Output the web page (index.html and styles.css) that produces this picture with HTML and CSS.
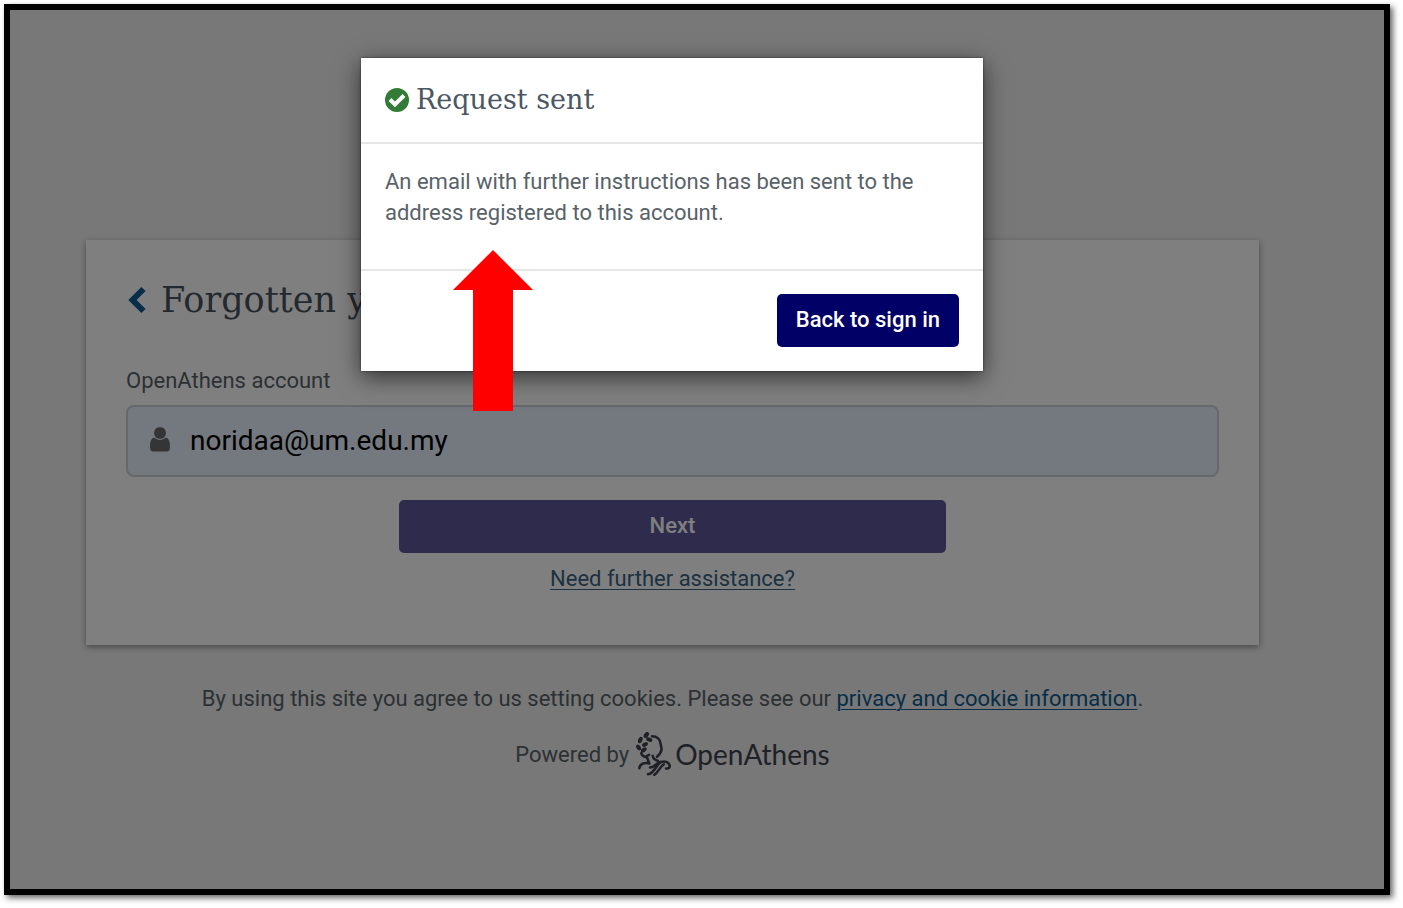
FILE: index.html
```html
<!DOCTYPE html>
<html lang="en">
<head>
<meta charset="utf-8">
<title>OpenAthens - Request sent</title>
<link rel="stylesheet" href="styles.css">
</head>
<body>
<div class="frame">
  <main class="page">
    <form class="card">
      <h1 class="card-title">
        <a class="back" href="#" aria-label="Back"><svg width="20" height="28" viewBox="0 0 20 28"><path d="M17.500 3 6.500 14l11 11" fill="none" stroke="currentColor" stroke-width="6"/></svg></a>
        <span>Forgotten your password?</span>
      </h1>
      <label class="label" for="account">OpenAthens account</label>
      <div class="field">
        <svg class="user" width="20" height="28" viewBox="0 0 20 28"><circle cx="10" cy="6" r="6"/><path d="M4 10.500C1 11.500 0 15 0 20c0 3 1 4.500 3.500 4.500h13c2.500 0 3.500-1.500 3.500-4.500 0-5-1-8.500-4-9.500-3.500 3.300-8.500 3.300-12 0z"/></svg>
        <input class="input" id="account" type="text" value="noridaa@um.edu.my">
      </div>
      <button class="btn btn-next" type="button">Next</button>
      <a class="help" href="#">Need further assistance?</a>
    </form>
    <footer class="footer">
      <p class="line">By using this site you agree to us setting cookies. Please see our <a href="#">privacy and cookie information</a>.</p>
      <div class="powered">
        <span>Powered by</span>
        <span class="brand">
          <svg width="35" height="44" viewBox="0 0 35 44" fill="none" stroke="currentColor" stroke-width="2.600" stroke-linecap="round" stroke-linejoin="round">
            <path d="M16 4.300c5 0 8.500 3 8.700 8 .1 2 1.300 3.500.8 5.500-.6 3-2 5-4.500 7"/>
            <path d="M5.300 21.300c.5 2 2 3.200 4 3.600l3.700-2M11 25.500l2.300 6c-4-1-9-.5-10 4.700M16.700 23.700c.3 2.500 2 4.300 5 5"/>
            <path d="M12 42.300c7-1 7.500-9.500 13-12.300 5-1.500 9 1 8.700 4.700-.5 1.800-2 2-3.700 1.800"/>
            <path d="M18.300 42.800c4-2 5-8 9.500-10.500M14 35.500c3.500 0 6-3 9-5.500"/>
            <g fill="currentColor" stroke="none">
              <ellipse cx="10.300" cy="3" rx="3.400" ry="2.200" transform="rotate(-55 10.300 3)"/>
              <ellipse cx="13.300" cy="7.600" rx="3.200" ry="2" transform="rotate(20 13.300 7.600)"/>
              <ellipse cx="4.300" cy="8" rx="3.400" ry="2.100" transform="rotate(-65 4.300 8)"/>
              <ellipse cx="9" cy="12.500" rx="3.200" ry="2" transform="rotate(-30 9 12.500)"/>
              <ellipse cx="2.600" cy="15.500" rx="3.200" ry="2" transform="rotate(55 2.600 15.500)"/>
              <ellipse cx="7.800" cy="18" rx="3.300" ry="2" transform="rotate(-35 7.800 18)"/>
            </g>
          </svg>
          <span class="wordmark">OpenAthens</span>
        </span>
      </div>
    </footer>
  </main>
  <div class="overlay">
    <section class="modal" role="dialog" aria-labelledby="modal-title">
      <header class="modal-head">
        <svg width="24" height="24" viewBox="0 0 24 24"><circle cx="12" cy="12" r="12" fill="#347b37"/><path d="m5 11.500 5 5 9-9" fill="none" stroke="#fff" stroke-width="4"/></svg>
        <h2 class="modal-title" id="modal-title">Request sent</h2>
      </header>
      <p class="modal-body">An email with further instructions has been sent to the address registered to this account.</p>
      <footer class="modal-foot"><button class="btn btn-back" type="button">Back to sign in</button></footer>
      <svg class="arrow" width="80" height="161" viewBox="0 0 80 161"><path d="M40 0 80 40H60V161H20V40H0z" fill="#f00"/></svg>
    </section>
  </div>
</div>
</body>
</html>
```
FILE: styles.css
```css
* { box-sizing: border-box; }
html { height: 100%; }
body {
  height: 100%;
  margin: 0;
  padding: 4px 13px 13px 4px;
  background: #fff;
  color: #586268;
  font: 22px/31px Roboto, sans-serif;
}
h1, h2, p { margin: 0; font-weight: 400; }
a { color: #0f5c90; text-underline-offset: 3px; text-decoration-thickness: 1px; }
.frame {
  position: relative;
  min-height: 100%;
  border: 6px solid #000;
  background: #f0f0f0;
  box-shadow: 3px 3px 6px rgba(0, 0, 0, .6);
}
.page { padding: 230px 125px 40px 76px; }
.card {
  display: flex;
  flex-direction: column;
  padding: 40px 40px 51px;
  background: #fff;
  box-shadow: 0 2px 6px rgba(0, 0, 0, .4);
}
.card-title {
  display: flex;
  align-items: center;
  gap: 15px;
  margin-bottom: 45px;
  color: #48525c;
  font: 35px/40px "DejaVu Serif", serif;
}
.back { display: flex; }
.label { margin-bottom: 9px; }
.field {
  display: flex;
  align-items: center;
  height: 72px;
  gap: 20px;
  padding: 0 22px;
  border: 2px solid #cdd0d6;
  border-radius: 8px;
  background: #e8f0fe;
}
.user { flex: none; fill: #6a6a70; }
.input {
  flex: 1;
  min-width: 0;
  padding: 0;
  border: 0;
  outline: 0;
  background: transparent;
  color: #000;
  font: 28px/36px Roboto, sans-serif;
}
.btn {
  height: 53px;
  padding: 0 19px 3px;
  border: 0;
  border-radius: 5px;
  color: #fff;
  font: 500 22px/31px Roboto, sans-serif;
}
.btn-next {
  align-self: center;
  width: 50%;
  margin: 23px 0 10px;
  background: #5d5699;
}
.help { align-self: center; color: #386484; }
.footer { padding-top: 38px; text-align: center; }
.powered {
  display: flex;
  align-items: center;
  justify-content: center;
  gap: 7px;
  margin-top: 18px;
}
.brand {
  display: flex;
  align-items: center;
  gap: 4px;
  color: #40434f;
}
.wordmark { font: 28px/36px Lato, sans-serif; }
.overlay {
  position: absolute;
  inset: 0;
  padding: 48px 50px 0 0;
  background: rgba(0, 0, 0, .5);
}
.modal {
  position: relative;
  width: 622px;
  max-width: 100%;
  margin: 0 auto;
  background: #fff;
  box-shadow: 0 6px 22px rgba(0, 0, 0, .6), 0 0 2px rgba(0, 0, 0, .6);
}
.modal-head {
  display: flex;
  align-items: center;
  gap: 7px;
  padding: 24px;
  border-bottom: 2px solid #e6e6e6;
}
.modal-title {
  color: #4c5763;
  font: 27px/36px "DejaVu Serif", serif;
}
.modal-body { padding: 22px 24px 41px; }
.modal-foot {
  display: flex;
  justify-content: flex-end;
  padding: 23px 24px 24px;
  border-top: 2px solid #e6e6e6;
}
.btn-back { background: #000066; }
.arrow { position: absolute; left: 92px; top: 192px; }
```
